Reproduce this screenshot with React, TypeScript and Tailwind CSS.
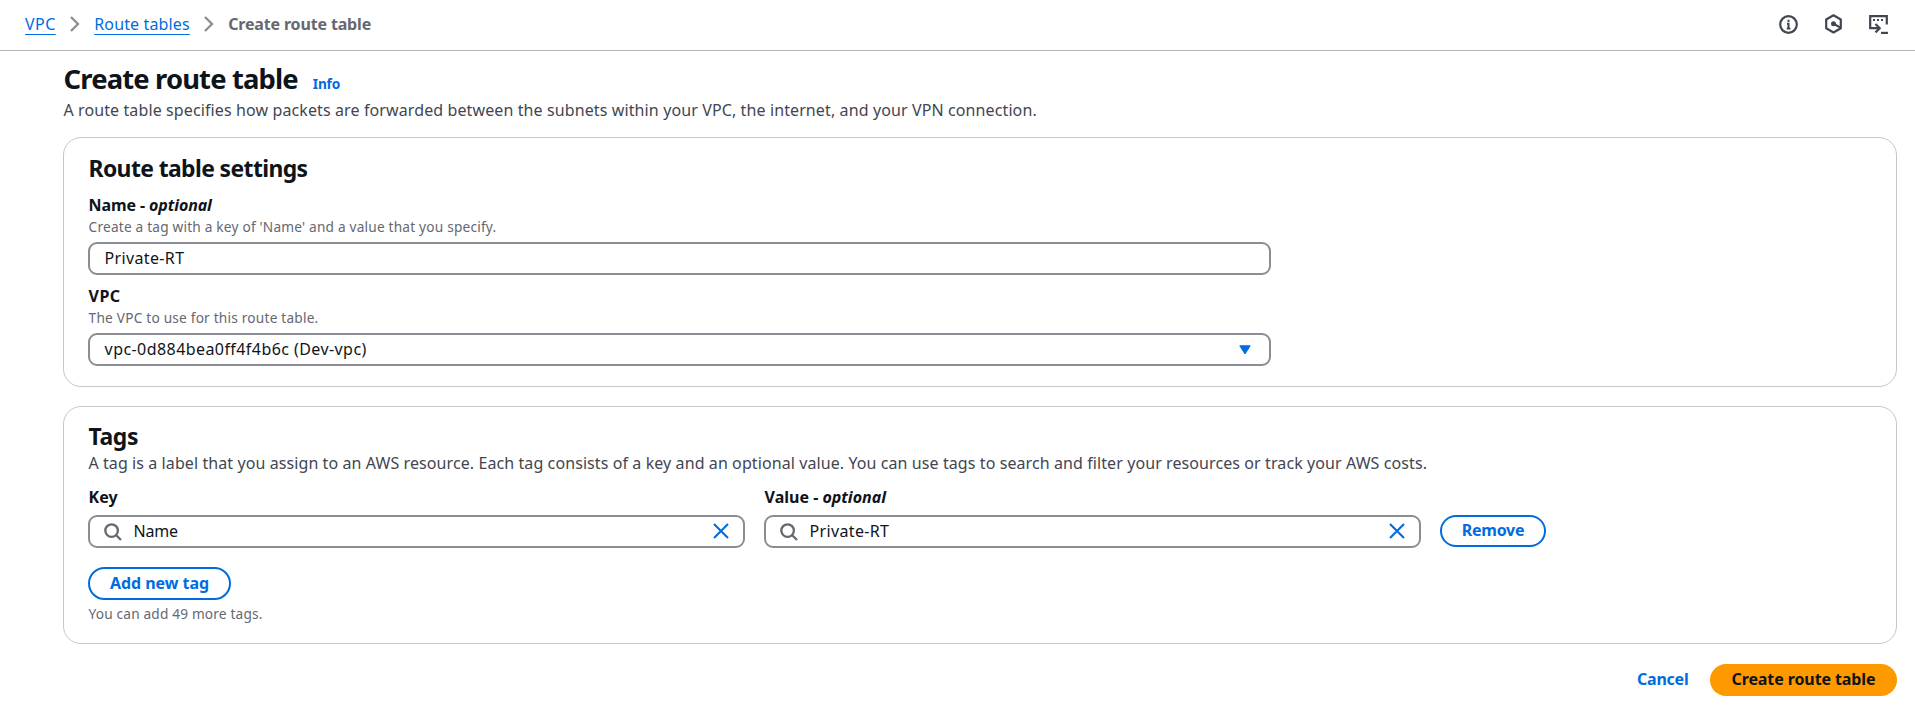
import type { ReactNode } from "react";

function Chevron({ className }: { className: string }) {
  return (
    <svg className={className} width="10" height="16" viewBox="0 0 10 16" fill="none" stroke="#8c8c94" strokeWidth="2.3">
      <path d="M1 1l7 7-7 7" />
    </svg>
  );
}

function SearchIcon() {
  return (
    <svg width="18" height="18" viewBox="0 0 18 18" fill="none" stroke="#656871" strokeWidth="2.3">
      <circle cx="7.6" cy="7.6" r="6.3" />
      <path d="M12 12l5 5" />
    </svg>
  );
}

function CloseIcon() {
  return (
    <svg className="mb-[1px] ml-auto" width="16" height="16" viewBox="0 0 16 16" fill="none" stroke="#006ce0" strokeWidth="2.1">
      <path d="M1 1l14 14M15 1L1 15" />
    </svg>
  );
}

function InfoIcon() {
  return (
    <svg width="19" height="19" viewBox="0 0 19 19" fill="none" stroke="#424650" strokeWidth="2.2">
      <circle cx="9.5" cy="9.5" r="8.3" />
      <path d="M9.500 4.700v2.200M8 8.800h1.500v4.400M7.800 13.500h3.600" strokeWidth="2" />
    </svg>
  );
}

function HexagonIcon() {
  return (
    <svg width="19" height="20" viewBox="0 0 19 20" stroke="#424650" fill="none" strokeWidth="2.2" strokeLinejoin="round">
      <path d="M9.5 1.3l7.3 4.2v8.7l-7.3 4.3-7.3-4.3V5.500z" />
      <circle cx="9.5" cy="9.8" r="2.5" fill="#424650" stroke="none" />
      <path d="M9.500 9.800l7 3.800" />
    </svg>
  );
}

function ShellIcon() {
  return (
    <svg width="19" height="19" viewBox="0 0 19 19" fill="none" stroke="#424650" strokeWidth="2.2">
      <path d="M5 13.200H1.200V1.200h16.600v8.300" />
      <path d="M4 5h2M8 5h2M12 5h2" strokeWidth="2" />
      <path d="M4.500 13.200h5.500M6.500 9l4.200 4.200-4.200 4.200" />
      <path d="M12 17.900h7" />
    </svg>
  );
}

function Helper({ children, className }: { children: ReactNode; className: string }) {
  return <p className={"pl-[0.6px] text-[13.7px] leading-[18px] text-[#656871] " + className}>{children}</p>;
}

function TagInput({ label, value }: { label: ReactNode; value: ReactNode }) {
  return (
    <div className="w-[657px]">
      <div className="pl-[0.6px] leading-[22px] font-bold">{label}</div>
      <div className="mt-[7px] flex h-[33px] items-center rounded-[9px] border-2 border-[#8c8c94] pr-[14px] pl-[14px]">
        <SearchIcon />
        <span className="ml-[11.5px] pb-[2px] leading-[24px]">{value}</span>
        <CloseIcon />
      </div>
    </div>
  );
}

export default function App() {
  return (
    <div className="min-h-[715px] bg-white font-['Noto_Sans','Open_Sans',sans-serif] text-[16px] text-[#0f141a]">
      <header className="flex h-[51px] items-center border-b border-[#b4b4bb] pr-[27px] pb-[2px] pl-[25px] leading-[24px]">
        <a className="tracking-[0.43px] text-[#006ce0] underline decoration-1 underline-offset-[4px]">VPC</a>
        <Chevron className="ml-[14px]" />
        <a className="ml-[14.6px] tracking-[0.134px] text-[#006ce0] underline decoration-1 underline-offset-[4px]">Route tables</a>
        <Chevron className="ml-[14px]" />
        <span className="ml-[14.4px] font-bold tracking-[-0.16px] text-[#656871]">Create route table</span>
        <div className="ml-auto flex items-center gap-[26px]">
          <InfoIcon />
          <HexagonIcon />
          <ShellIcon />
        </div>
      </header>

      <main className="pt-[10px] pr-[18px] pl-[63px]">
        <div className="flex items-baseline gap-[15px] pl-[0.6px]">
          <h1 className="text-[27.4px] leading-[36px] font-bold tracking-[-0.85px]">Create route table</h1>
          <a className="text-[13.7px] leading-[18px] font-bold tracking-[-0.2px] text-[#006ce0]">Info</a>
        </div>
        <p className="mt-[2px] pl-[0.4px] leading-[23px] tracking-[0.112px] text-[#424650]">
          A route table specifies how packets are forwarded between the subnets within your VPC, the internet, and your VPN connection.
        </p>

        <section className="mt-[15px] h-[250px] rounded-[18px] border border-[#c6c6cd] px-6 pt-[17px]">
          <h2 className="pl-[0.5px] text-[22.9px] leading-[28px] font-bold tracking-[-0.6px]">Route table settings</h2>
          <div className="mt-[11px] pl-[0.6px] leading-[22px] font-bold tracking-[-0.1px]">
            Name - <i>optional</i>
          </div>
          <Helper className="mt-[2px] tracking-[0.19px]">Create a tag with a key of 'Name' and a value that you specify.</Helper>
          <div className="mt-[6px] flex h-[33px] w-[1183px] items-center rounded-[9px] border-2 border-[#8c8c94] px-[14.6px]">
            <span className="pb-[2px] leading-[24px] tracking-[0.35px]">Private-RT</span>
          </div>
          <div className="mt-[10px] pl-[0.6px] leading-[22px] font-bold tracking-[0.4px]">VPC</div>
          <Helper className="mt-[2px] tracking-[0.2px]">The VPC to use for this route table.</Helper>
          <div className="mt-[6px] flex h-[33px] w-[1183px] items-center justify-between rounded-[9px] border-2 border-[#8c8c94] pr-[18.5px] pl-[14.6px]">
            <span className="pb-[2px] leading-[24px] tracking-[0.43px]">vpc-0d884bea0ff4f4b6c (Dev-vpc)</span>
            <svg width="12" height="10" viewBox="0 0 12 10" fill="#006ce0" stroke="#006ce0" strokeLinejoin="round">
              <path d="M.8.8h10.400L6 9z" />
            </svg>
          </div>
        </section>

        <section className="mt-[19px] h-[238px] rounded-[18px] border border-[#c6c6cd] px-6 pt-[16px]">
          <h2 className="pl-[0.5px] text-[22.9px] leading-[28px] font-bold tracking-[-0.386px]">Tags</h2>
          <p className="mt-[1px] pl-[0.4px] leading-[22px] tracking-[0.09px] text-[#424650]">
            A tag is a label that you assign to an AWS resource. Each tag consists of a key and an optional value. You can use tags to search and filter your resources or track your AWS costs.
          </p>
          <div className="mt-[12px] flex items-end">
            <TagInput label="Key" value={<span className="tracking-[-0.2px]">Name</span>} />
            <div className="ml-[19px]">
              <TagInput label={<>Value - <i>optional</i></>} value={<span className="tracking-[0.35px]">Private-RT</span>} />
            </div>
            <button className="mb-[1px] ml-[19px] flex h-[32px] w-[106px] items-center justify-center rounded-full border-2 border-[#006ce0] pb-[2px] leading-[24px] font-bold tracking-[-0.25px] text-[#006ce0]">Remove</button>
          </div>
          <button className="mt-[19px] flex h-[33px] w-[143px] items-center justify-center rounded-full border-2 border-[#006ce0] pb-[2px] leading-[24px] font-bold tracking-[-0.05px] text-[#006ce0]">Add new tag</button>
          <Helper className="mt-[5px] tracking-[0.16px]">You can add 49 more tags.</Helper>
        </section>

        <div className="mt-[20px] flex items-center justify-end">
          <button className="pb-[2px] leading-[24px] font-bold tracking-[-0.25px] text-[#006ce0]">Cancel</button>
          <button className="ml-[21.600px] flex h-[32px] w-[187px] items-center justify-center rounded-full bg-[#ff9900] pb-[2px] leading-[24px] font-bold tracking-[-0.1px]">Create route table</button>
        </div>
      </main>
    </div>
  );
}
